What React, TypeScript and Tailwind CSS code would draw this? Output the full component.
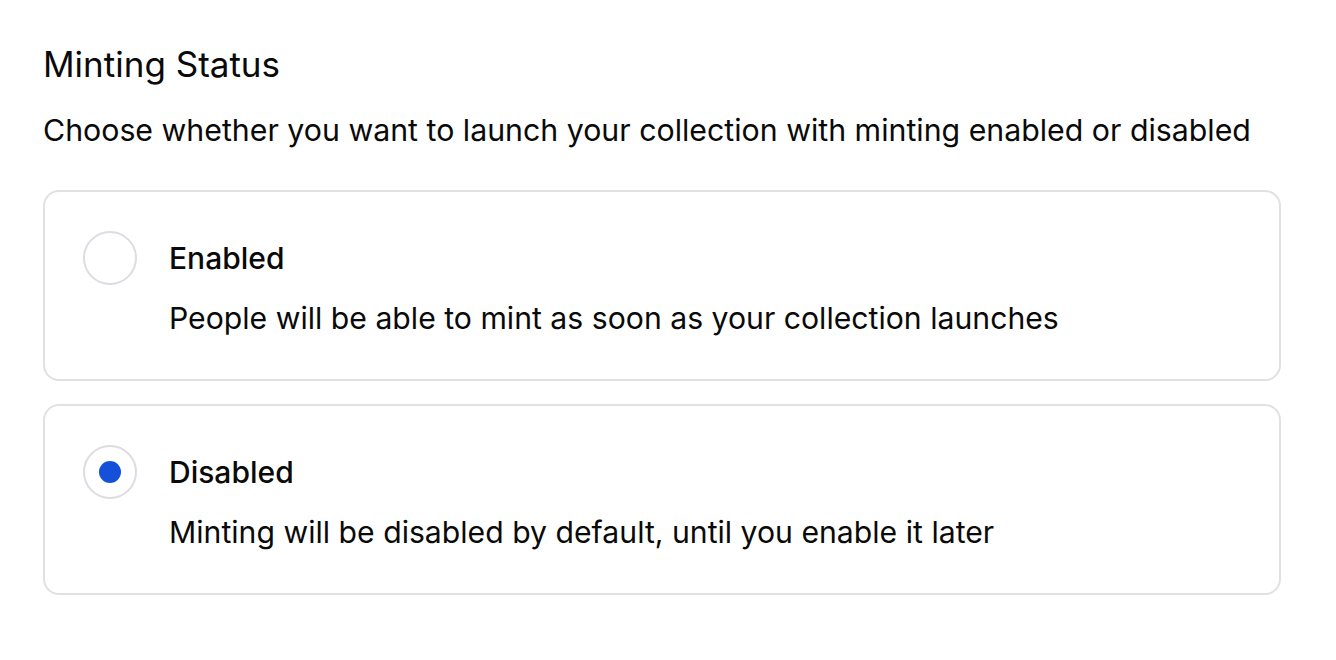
import React, { useState } from 'react';

type Option = { id: string; title: string; desc: string };

const options: Option[] = [
  { id: 'enabled', title: 'Enabled', desc: 'People will be able to mint as soon as your collection launches' },
  { id: 'disabled', title: 'Disabled', desc: 'Minting will be disabled by default, until you enable it later' },
];

const App: React.FC = () => {
  const [selected, setSelected] = useState('disabled');

  return (
    <div className="min-h-screen bg-white text-[#0a0a0a] px-[43px] pt-[42px]" style={{ fontFamily: 'Inter, "Noto Sans", sans-serif' }}>
      <h2 className="text-[35px] leading-[44px] font-normal">Minting Status</h2>
      <p className="mt-[24px] text-[30.3px] leading-[40px]">
        Choose whether you want to launch your collection with minting enabled or disabled
      </p>

      <div className="mt-[40px] w-[1238px] flex flex-col gap-[23px]">
        {options.map((o) => {
          const active = selected === o.id;
          return (
            <div
              key={o.id}
              onClick={() => setSelected(o.id)}
              className="border-2 border-[#e0e0e5] rounded-[16px] px-[38px] pt-[39px] pb-[41px] cursor-pointer"
            >
              <div className="flex items-center gap-[32px]">
                <div className="w-[54px] h-[54px] rounded-full border-2 border-[#dcdce2] flex items-center justify-center shrink-0">
                  {active && <div className="w-[22px] h-[22px] rounded-full bg-[#1450d8]"></div>}
                </div>
                <div className="text-[30px] font-medium leading-[40px]">{o.title}</div>
              </div>
              <div className="pl-[86px] mt-[13px] text-[30.2px] leading-[40px]">{o.desc}</div>
            </div>
          );
        })}
      </div>
    </div>
  );
};

export default App;
